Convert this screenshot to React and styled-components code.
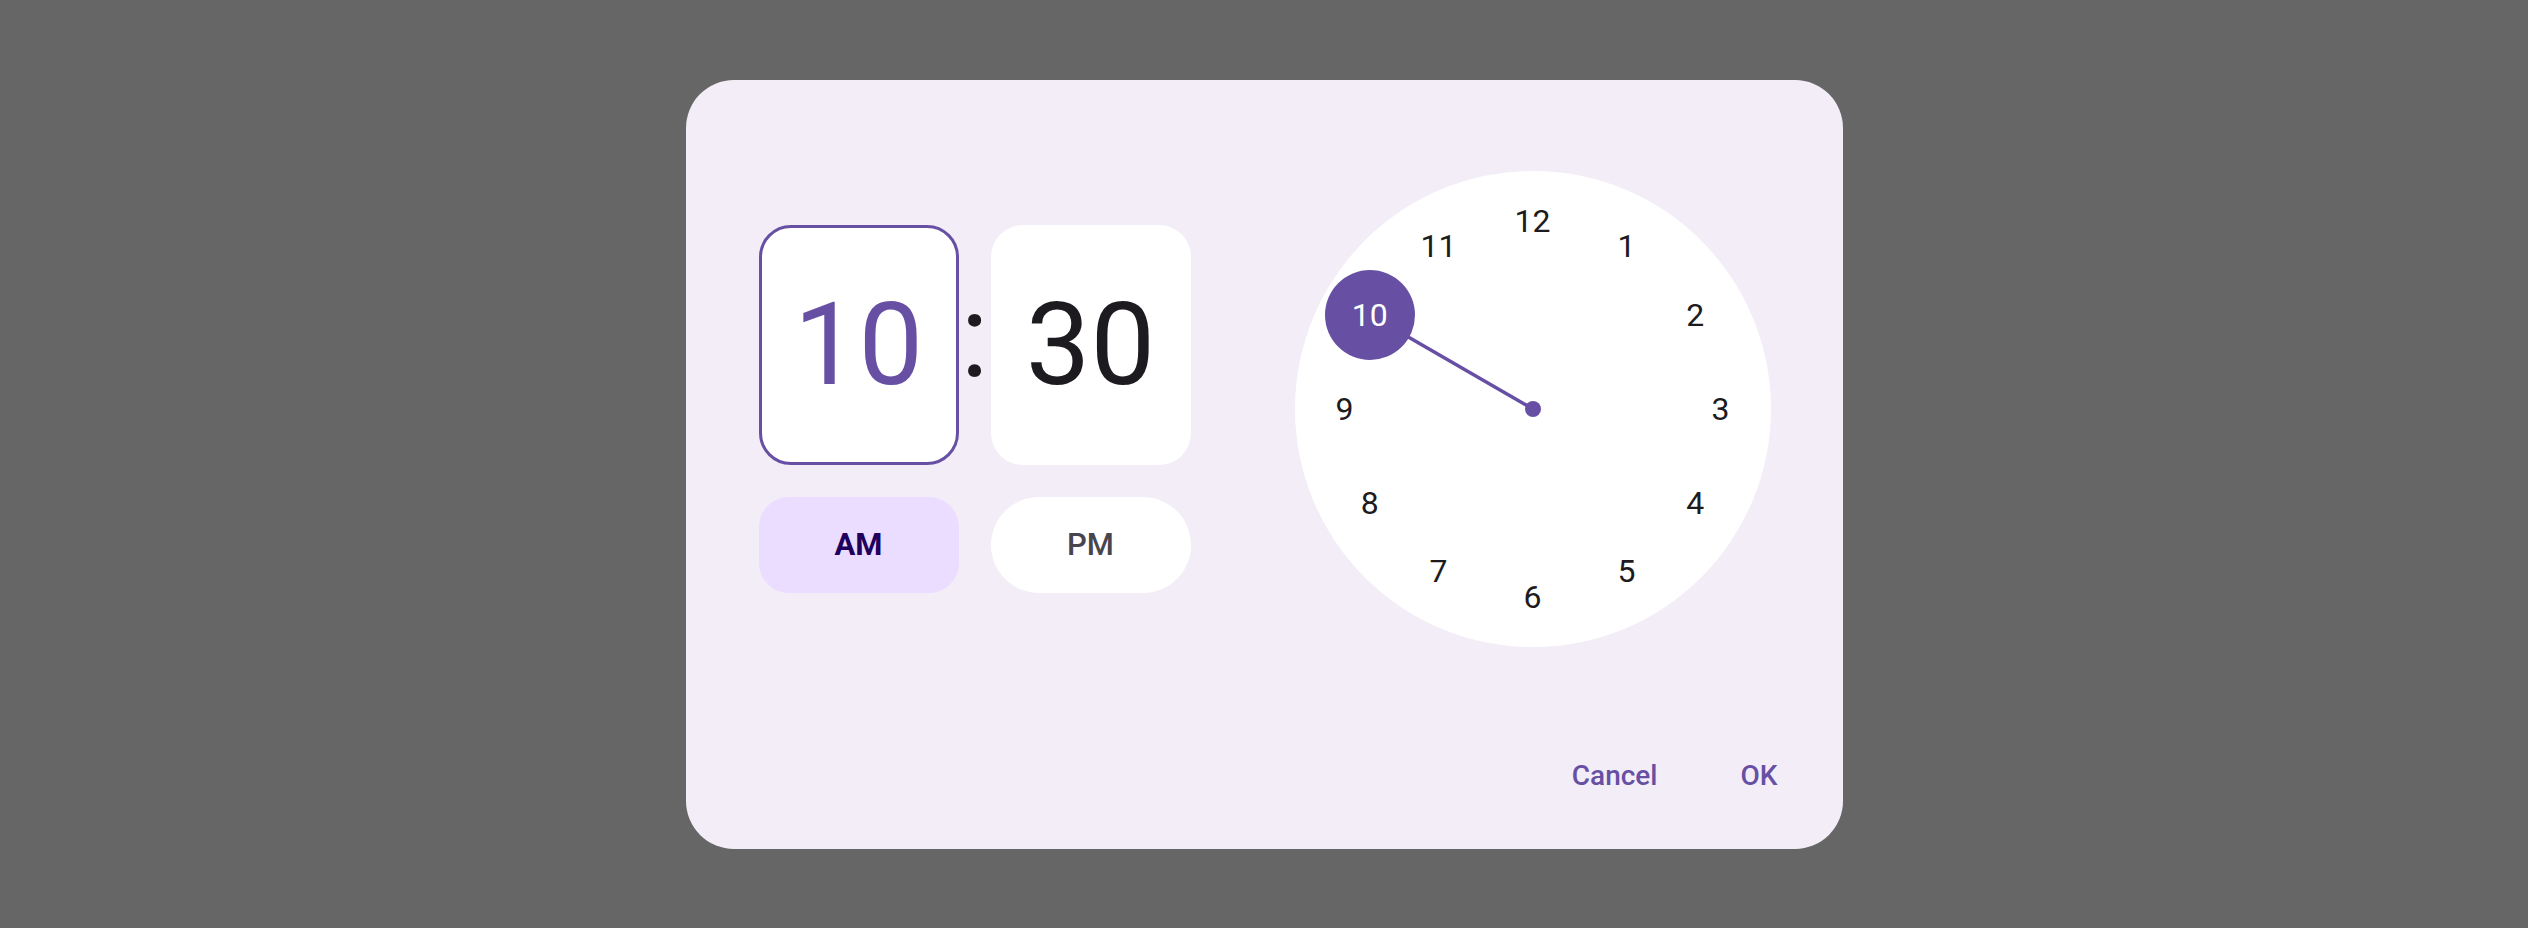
import React from 'react';
import styled, { createGlobalStyle } from 'styled-components';

const GlobalStyle = createGlobalStyle`
  html, body {
    margin: 0;
    padding: 0;
    height: 100%;
  }
  body {
    background: #666666;
    font-family: Roboto, "Noto Sans", "Liberation Sans", sans-serif;
  }
  #root {
    height: 100%;
  }
`;

const Page = styled.div`
  height: 100vh;
  display: flex;
  align-items: center;
  justify-content: center;
`;

const Dialog = styled.div`
  width: 1157px;
  height: 769px;
  box-sizing: border-box;
  background: #f3edf7;
  border-radius: 48px;
  display: flex;
  flex-direction: column;
`;

const Body = styled.div`
  display: flex;
  align-items: center;
  justify-content: space-between;
  padding: 91px 72px 0 73px;
`;

const Selector = styled.div`
  display: flex;
  flex-direction: column;
  gap: 32px;
`;

const TimeRow = styled.div`
  display: flex;
  align-items: center;
`;

const TimeBox = styled.div`
  width: 200px;
  height: 240px;
  box-sizing: border-box;
  border-radius: 32px;
  background: #ffffff;
  border: ${(p) => (p.$active ? '3.5px solid #6750a4' : 'none')};
  display: flex;
  align-items: center;
  justify-content: center;
  font-size: 115px;
  font-weight: 400;
  line-height: 1;
  color: ${(p) => (p.$active ? '#6750a4' : '#1d1b20')};
`;

const Colon = styled.div`
  width: 32px;
  height: 240px;
  display: flex;
  flex-direction: column;
  align-items: center;
  justify-content: center;
  font-size: 116px;
  line-height: 1;
  color: #1d1b20;
  transform: translateY(-9px);
`;

const PeriodRow = styled.div`
  display: flex;
  gap: 32px;
`;

const Period = styled.button`
  width: 200px;
  height: 96px;
  border: none;
  margin: 0;
  padding: 0;
  font-family: inherit;
  font-size: 31px;
  border-radius: ${(p) => (p.$active ? '30px' : '48px')};
  background: ${(p) => (p.$active ? '#eaddff' : '#ffffff')};
  color: ${(p) => (p.$active ? '#21005d' : '#49454f')};
  font-weight: ${(p) => (p.$active ? 700 : 500)};
`;

const Face = styled.div`
  position: relative;
  width: 476px;
  height: 476px;
  border-radius: 50%;
  background: #ffffff;
`;

const Hand = styled.svg`
  position: absolute;
  inset: 0;
`;

const Number = styled.div`
  position: absolute;
  transform: translate(-50%, -50%);
  width: 90px;
  height: 90px;
  border-radius: 50%;
  display: flex;
  align-items: center;
  justify-content: center;
  font-size: 32px;
  line-height: 1;
  background: ${(p) => (p.$selected ? '#6750a4' : 'transparent')};
  color: ${(p) => (p.$selected ? '#ffffff' : '#1d1b20')};
`;

const Actions = styled.div`
  margin-top: auto;
  display: flex;
  justify-content: flex-end;
  gap: 35px;
  padding: 0 41px 41px 0;
`;

const TextButton = styled.button`
  height: 64px;
  padding: 0 24px;
  border: none;
  background: transparent;
  font-family: inherit;
  font-size: 28px;
  font-weight: 500;
  color: #6750a4;
`;

const SIZE = 476;
const C = SIZE / 2;
const R = 188;
const SELECTED = 10;

const pos = (h) => {
  const a = (h % 12) * (Math.PI / 6);
  return { x: C + R * Math.sin(a), y: C - R * Math.cos(a) };
};

const Clock = () => {
  const sel = pos(SELECTED);
  const hours = [12, 1, 2, 3, 4, 5, 6, 7, 8, 9, 10, 11];
  return (
    <Face>
      <Hand width={SIZE} height={SIZE} viewBox={`0 0 ${SIZE} ${SIZE}`}>
        <line x1={C} y1={C} x2={sel.x} y2={sel.y} stroke="#6750a4" strokeWidth="3.5" />
        <circle cx={C} cy={C} r="8" fill="#6750a4" />
      </Hand>
      {hours.map((h) => {
        const p = pos(h);
        return (
          <Number key={h} $selected={h === SELECTED} style={{ left: p.x, top: p.y }}>
            {h}
          </Number>
        );
      })}
    </Face>
  );
};

export default function App() {
  return (
    <>
      <GlobalStyle />
      <Page>
        <Dialog>
          <Body>
            <Selector>
              <TimeRow>
                <TimeBox $active>10</TimeBox>
                <Colon>:</Colon>
                <TimeBox>30</TimeBox>
              </TimeRow>
              <PeriodRow>
                <Period $active>AM</Period>
                <Period>PM</Period>
              </PeriodRow>
            </Selector>
            <Clock />
          </Body>
          <Actions>
            <TextButton>Cancel</TextButton>
            <TextButton>OK</TextButton>
          </Actions>
        </Dialog>
      </Page>
    </>
  );
}
